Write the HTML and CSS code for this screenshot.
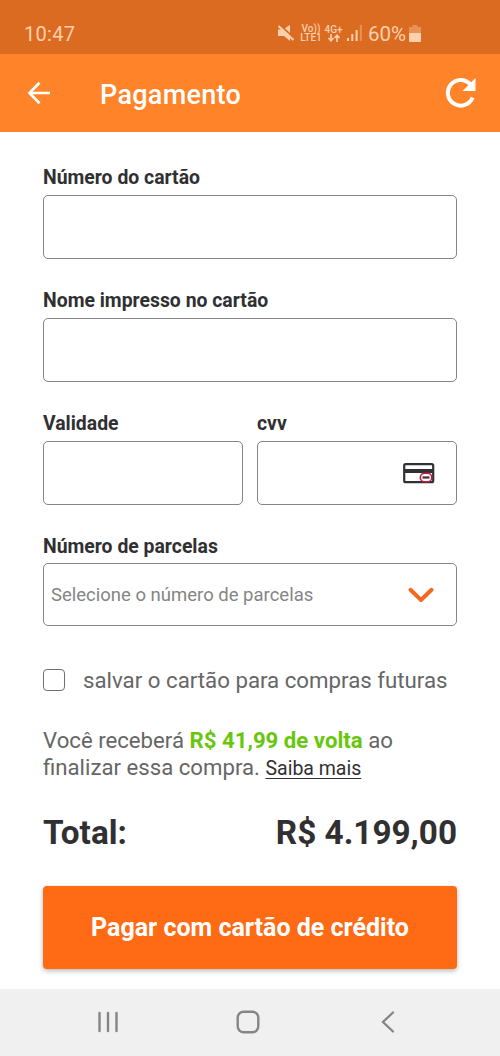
FILE: index.html
```html
<!DOCTYPE html>
<html lang="pt-BR">
<head>
<meta charset="utf-8">
<title>Pagamento</title>
<link rel="stylesheet" href="styles.css">
</head>
<body>
<div class="screen">
  <div class="status">
    <span class="clock">10:47</span>
    <div class="indicators">
      <svg class="mute" width="16" height="18" viewBox="0 0 16 18"><path d="M0 5.500h5L12 1v16l-6-5H0z" fill="currentColor"/><path d="M2 1l14 13" stroke="#da6b20" stroke-width="2"/><path d="M.5 2l15 14" stroke="currentColor" stroke-width="2"/></svg>
      <span class="stack volte"><span>Vo))</span><span>LTE1</span></span>
      <span class="stack net"><span>4G+</span><svg width="12" height="8" viewBox="0 0 12 8" fill="none" stroke="currentColor" stroke-width="1.6"><path d="M3 0v6.500M.5 4L3 6.800 5.500 4M9 8V1.500M6.500 4L9 1.200 11.500 4"/></svg></span>
      <svg class="signal" width="16" height="16" viewBox="0 0 16 16" fill="currentColor"><path d="M0 13h2v3H0zM4.300 9h2v7h-2zM8.600 5h2v11h-2z"/><path d="M12.800 0h2v16h-2z" opacity=".4"/></svg>
      <span class="percent">60%</span>
      <svg class="battery" width="12" height="17" viewBox="0 0 12 17" fill="currentColor"><path d="M3.500 0h5v2H12v6H0V2h3.500z" opacity=".4"/><path d="M0 8h12v8a1 1 0 0 1-1 1H1a1 1 0 0 1-1-1z"/></svg>
    </div>
  </div>
  <header class="appbar">
    <svg class="back" width="24" height="24" viewBox="0 0 24 24" fill="none" stroke="#fff" stroke-width="2.700"><path d="M23 12H3M12.500 1.800L2.500 12l10 10.200"/></svg>
    <h1 class="title">Pagamento</h1>
    <svg class="reload" width="32" height="32" viewBox="0 0 32 32"><path d="M27.600 20.500A12.800 12.800 0 1 1 25.200 7.200" fill="none" stroke="#fff" stroke-width="4"/><path d="M30.500 1v13h-13z" fill="#fff"/></svg>
  </header>
  <main class="form">
    <div class="field"><label class="label">Número do cartão</label><div class="box"></div></div>
    <div class="field"><label class="label">Nome impresso no cartão</label><div class="box"></div></div>
    <div class="row">
      <div class="field"><label class="label">Validade</label><div class="box"></div></div>
      <div class="field"><label class="label">cvv</label><div class="box cvv">
        <svg width="32" height="21" viewBox="0 0 32 21"><rect x="1.200" y="1.200" width="29" height="18" rx="1.500" fill="#fff" stroke="#303036" stroke-width="2.200"/><path d="M1 6h30v4H1z" fill="#303036"/><rect x="17.300" y="10.200" width="11.500" height="8.600" rx="4.300" fill="#fff" stroke="#c41c3c" stroke-width="1.600"/><path d="M19.500 14.500h7" stroke="#4a2835" stroke-width="2.200"/></svg>
      </div></div>
    </div>
    <div class="field parcels"><label class="label">Número de parcelas</label><div class="box select"><span class="placeholder">Selecione o número de parcelas</span>
      <svg width="26" height="16" viewBox="0 0 26 16" fill="none" stroke="#f26a21" stroke-width="4" stroke-linecap="round" stroke-linejoin="round"><path d="M2.500 2.800L13 13 23.500 2.800"/></svg>
    </div></div>
    <label class="save"><span class="check"></span><span class="save-text">salvar o cartão para compras futuras</span></label>
    <p class="cashback">Você receberá <b>R$ 41,99 de volta</b> ao<br>finalizar essa compra. <a class="more">Saiba mais</a></p>
    <div class="total"><span class="total-label">Total:</span><span>R$ 4.199,00</span></div>
    <button class="pay">Pagar com cartão de crédito</button>
  </main>
  <nav class="nav">
    <svg width="22" height="22" viewBox="0 0 22 22" stroke="#858585" stroke-width="2.400" stroke-linecap="round"><path d="M2.500 2v18M11 2v18M19.500 2v18"/></svg>
    <svg class="home" width="24" height="24" viewBox="0 0 24 24" fill="none" stroke="#858585" stroke-width="2.400"><rect x="1.700" y="1.700" width="20.600" height="20.600" rx="6"/></svg>
    <svg width="14" height="22" viewBox="0 0 14 22" fill="none" stroke="#858585" stroke-width="2.300" stroke-linecap="round"><path d="M12 1.500L2 11l10 9.500"/></svg>
  </nav>
</div>
</body>
</html>
```
FILE: styles.css
```css
* { box-sizing: border-box; }
body { margin: 0; background: #fff; font-family: Roboto, "Liberation Sans", sans-serif; color: #303033; }
.screen { width: 500px; height: 1056px; display: flex; flex-direction: column; overflow: hidden; }
svg { display: block; flex: none; }
.status { height: 54px; background: #da6b20; color: #fbd0ad; display: flex; justify-content: space-between; padding: 13px 79px 0 24px; }
.clock { font-size: 20px; line-height: 42px; letter-spacing: .3px; }
.indicators { display: flex; align-items: center; height: 40px; }
.mute { margin-right: 6px; }
.stack { display: flex; flex-direction: column; align-items: center; font-size: 10px; line-height: 9px; font-weight: 500; white-space: nowrap; }
.volte { width: 22px; margin-right: 2px; }
.net { width: 19px; margin-right: 4px; }
.signal { margin-right: 5px; }
.percent { font-size: 20.500px; width: 41px; white-space: nowrap; line-height: 24px; padding-top: 1px; }
.appbar { height: 78px; background: #ff8429; display: flex; align-items: center; padding: 0 23px 0 27px; }
.title { margin: 3px auto 0 49px; font-size: 27px; font-weight: 500; letter-spacing: .3px; color: #fff; line-height: 34px; }
.form { flex: 1; padding: 28px 43px 0; }
.field { flex: 1; margin-bottom: 24px; }
.label { display: block; font-size: 19.400px; font-weight: 700; line-height: 35px; }
.box { height: 64px; border: 1px solid #858585; border-radius: 5px; background: #fff; }
.row { display: flex; gap: 14px; }
.cvv { display: flex; align-items: center; justify-content: flex-end; padding-right: 21px; }
.select { height: 63px; margin-top: -1px; display: flex; align-items: center; justify-content: space-between; padding: 0 22px 0 7px; }
.placeholder { font-size: 18.500px; color: #858585; }
.save { display: flex; align-items: center; height: 24px; margin-top: 42px; }
.check { width: 22px; height: 22px; border: 1.5px solid #707070; border-radius: 4px; margin-right: 18px; }
.save-text { font-size: 22.250px; color: #666; white-space: nowrap; }
.cashback { margin: 35px 0 0; font-size: 22.200px; line-height: 27px; color: #666; white-space: nowrap; }
.cashback b { color: #68c70c; }
.more { font-size: 19.500px; color: #303033; text-decoration: underline; text-underline-offset: 3px; }
.total { display: flex; justify-content: space-between; margin-top: 31px; font-size: 33.300px; font-weight: 700; line-height: 40px; }
.pay { display: block; width: 100%; height: 83px; margin-top: 33px; border: 0; border-radius: 4px; background: #ff6a14; color: #fff; font: 700 25px Roboto, "Liberation Sans", sans-serif; box-shadow: 0 2px 5px rgba(0, 0, 0, .28); white-space: nowrap; }
.nav { height: 67px; background: #f0f0f0; display: flex; align-items: center; justify-content: space-between; padding: 0 105px 2px 97px; }
.home { margin-right: 5px; }
```
